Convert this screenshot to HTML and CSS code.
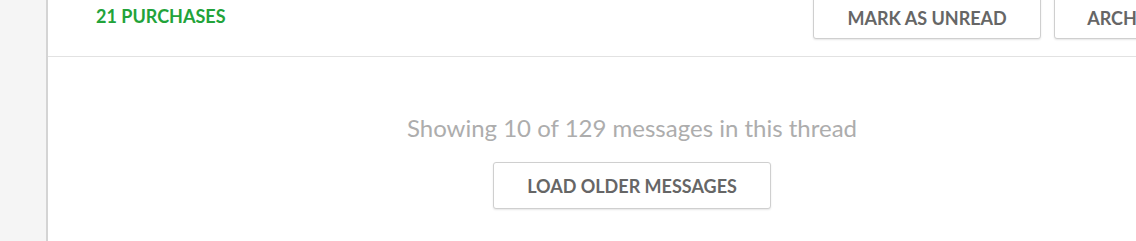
FILE: index.html
```html
<!DOCTYPE html>
<html>
<head>
<meta charset="utf-8">
<link rel="stylesheet" href="styles.css">
</head>
<body>
<div class="page">
  <aside class="sidebar"></aside>
  <main class="main">
    <header class="thread-header">
      <div class="purchases">21 PURCHASES</div>
      <div class="actions">
        <button class="btn">MARK AS UNREAD</button>
        <button class="btn">ARCHIVE</button>
      </div>
    </header>
    <section class="older">
      <p class="count">Showing 10 of 129 messages in this thread</p>
      <button class="btn btn-load">LOAD OLDER MESSAGES</button>
    </section>
  </main>
</div>
</body>
</html>
```
FILE: styles.css
```css
html, body {
  margin: 0;
  padding: 0;
  background: #fff;
  font-family: Lato, "Open Sans", sans-serif;
  overflow: hidden;
}
.page {
  display: flex;
  width: 1136px;
  height: 241px;
  overflow: hidden;
}
.sidebar {
  width: 46px;
  flex: 0 0 46px;
  background: #f5f5f5;
  border-right: 2px solid #d4d4d4;
}
.main {
  flex: 0 0 1168px;
  width: 1168px;
}
.thread-header {
  height: 56px;
  border-bottom: 1px solid #e2e2e2;
  display: flex;
  justify-content: space-between;
  align-items: flex-start;
  padding: 0 18px 0 48px;
}
.purchases {
  color: #22a33a;
  font-weight: 700;
  font-size: 18px;
  line-height: 22px;
  margin-top: 5px;
}
.actions {
  display: flex;
  gap: 13px;
  margin-top: -4px;
  flex-shrink: 0;
}
.btn {
  font-family: Lato, "Open Sans", sans-serif;
  font-weight: 700;
  font-size: 18px;
  color: #666;
  background: #fff;
  border: 1px solid #cfcfcf;
  border-radius: 3px;
  box-shadow: 0 1px 2px rgba(0,0,0,0.1);
  height: 43px;
  padding: 0 32px;
  white-space: nowrap;
}
.actions .btn:first-child {
  width: 228px;
  padding: 0;
}
.older {
  display: flex;
  flex-direction: column;
  align-items: center;
  padding-top: 56px;
}
.count {
  margin: 0;
  font-size: 24px;
  color: #adadad;
  line-height: 30px;
  margin-bottom: 19px;
}
.btn-load {
  height: 47px;
  width: 278px;
  padding: 0;
}
```
